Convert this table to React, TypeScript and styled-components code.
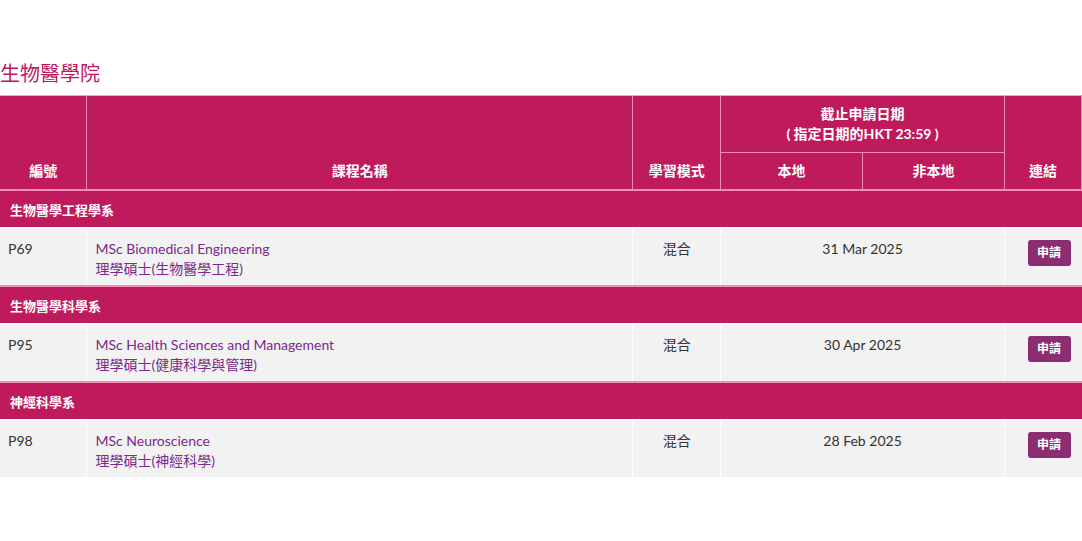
import React from 'react';
import styled, { createGlobalStyle } from 'styled-components';

const GlobalStyle = createGlobalStyle`
  body {
    margin: 0;
    background: #ffffff;
    font-family: Lato, "Noto Sans CJK TC", sans-serif;
  }
`

const Page = styled.div`
  padding-top: 59px;
`

const Title = styled.h2`
  margin: 0 0 8px 0;
  font-size: 20px;
  line-height: 28px;
  font-weight: 400;
  color: #c0175c;
`

const Table = styled.table`
  width: 100%;
  border-collapse: collapse;
  font-size: 14px;
  color: #333333;
`

const Head = styled.th<{ $align?: string }>`
  background-color: #bf1a5c;
  color: #ffffff;
  font-weight: 700;
  font-size: 14px;
  line-height: 20px;
  border: 1px solid #f58cb6;
  border-top-color: #f3a9c8;
  padding: 8px 8px;
  vertical-align: ${p => p.$align || 'bottom'};
  text-align: center;
  &:first-child { border-left: none; }
`

const CategoryCell = styled.td`
  background-color: #bf1a5c;
  color: #ffffff;
  font-weight: 700;
  font-size: 13px;
  height: 36px;
  padding: 0 10px;
  border-top: 2px solid #f58cb6;
  border-bottom: 2px solid #ffffff;
`

const Cell = styled.td<{ $align?: string }>`
  background-color: #f2f2f2;
  border-left: 1px solid #ffffff;
  border-right: 1px solid #ffffff;
  vertical-align: top;
  padding: 10px 8px 0 8px;
  height: 46px;
  line-height: 20px;
  text-align: ${p => p.$align || 'left'};
  &:first-child { border-left: none; }
  &:last-child { border-right: none; padding-right: 11px; }
`

const CourseName = styled.div`
  color: #7b2a8c;
`

const ApplyButton = styled.a`
  display: inline-block;
  width: 43px;
  height: 26px;
  line-height: 26px;
  margin-top: 1px;
  background-color: #8b2d73;
  color: #ffffff;
  font-size: 12px;
  font-weight: 700;
  border-radius: 3px;
  text-align: center;
  text-decoration: none;
`

const programmes = [
  {
    dept: '生物醫學工程學系',
    code: 'P69',
    en: 'MSc Biomedical Engineering',
    zh: '理學碩士(生物醫學工程)',
    date: '31 Mar 2025',
  },
  {
    dept: '生物醫學科學系',
    code: 'P95',
    en: 'MSc Health Sciences and Management',
    zh: '理學碩士(健康科學與管理)',
    date: '30 Apr 2025',
  },
  {
    dept: '神經科學系',
    code: 'P98',
    en: 'MSc Neuroscience',
    zh: '理學碩士(神經科學)',
    date: '28 Feb 2025',
  },
]

const App = () => {
  return (
    <Page>
      <GlobalStyle />
      <Title>生物醫學院</Title>
      <Table>
        <colgroup>
          <col style={{ width: 87 }} />
          <col style={{ width: 546 }} />
          <col style={{ width: 88 }} />
          <col style={{ width: 142 }} />
          <col style={{ width: 142 }} />
          <col style={{ width: 77 }} />
        </colgroup>
        <thead>
          <tr>
            <Head rowSpan={2}>編號</Head>
            <Head rowSpan={2}>課程名稱</Head>
            <Head rowSpan={2}>學習模式</Head>
            <Head colSpan={2} $align="middle">
              截止申請日期
              <br />( 指定日期的HKT 23:59 )
            </Head>
            <Head rowSpan={2}>連結</Head>
          </tr>
          <tr>
            <Head $align="middle">本地</Head>
            <Head $align="middle">非本地</Head>
          </tr>
        </thead>
        <tbody>
          {programmes.map(p => (
            <React.Fragment key={p.code}>
              <tr>
                <CategoryCell colSpan={6}>{p.dept}</CategoryCell>
              </tr>
              <tr>
                <Cell>{p.code}</Cell>
                <Cell>
                  <CourseName>{p.en}</CourseName>
                  <CourseName>{p.zh}</CourseName>
                </Cell>
                <Cell $align="center">混合</Cell>
                <Cell $align="center" colSpan={2}>{p.date}</Cell>
                <Cell $align="right">
                  <ApplyButton href="#">申請</ApplyButton>
                </Cell>
              </tr>
            </React.Fragment>
          ))}
        </tbody>
      </Table>
    </Page>
  );
}

export default App;
